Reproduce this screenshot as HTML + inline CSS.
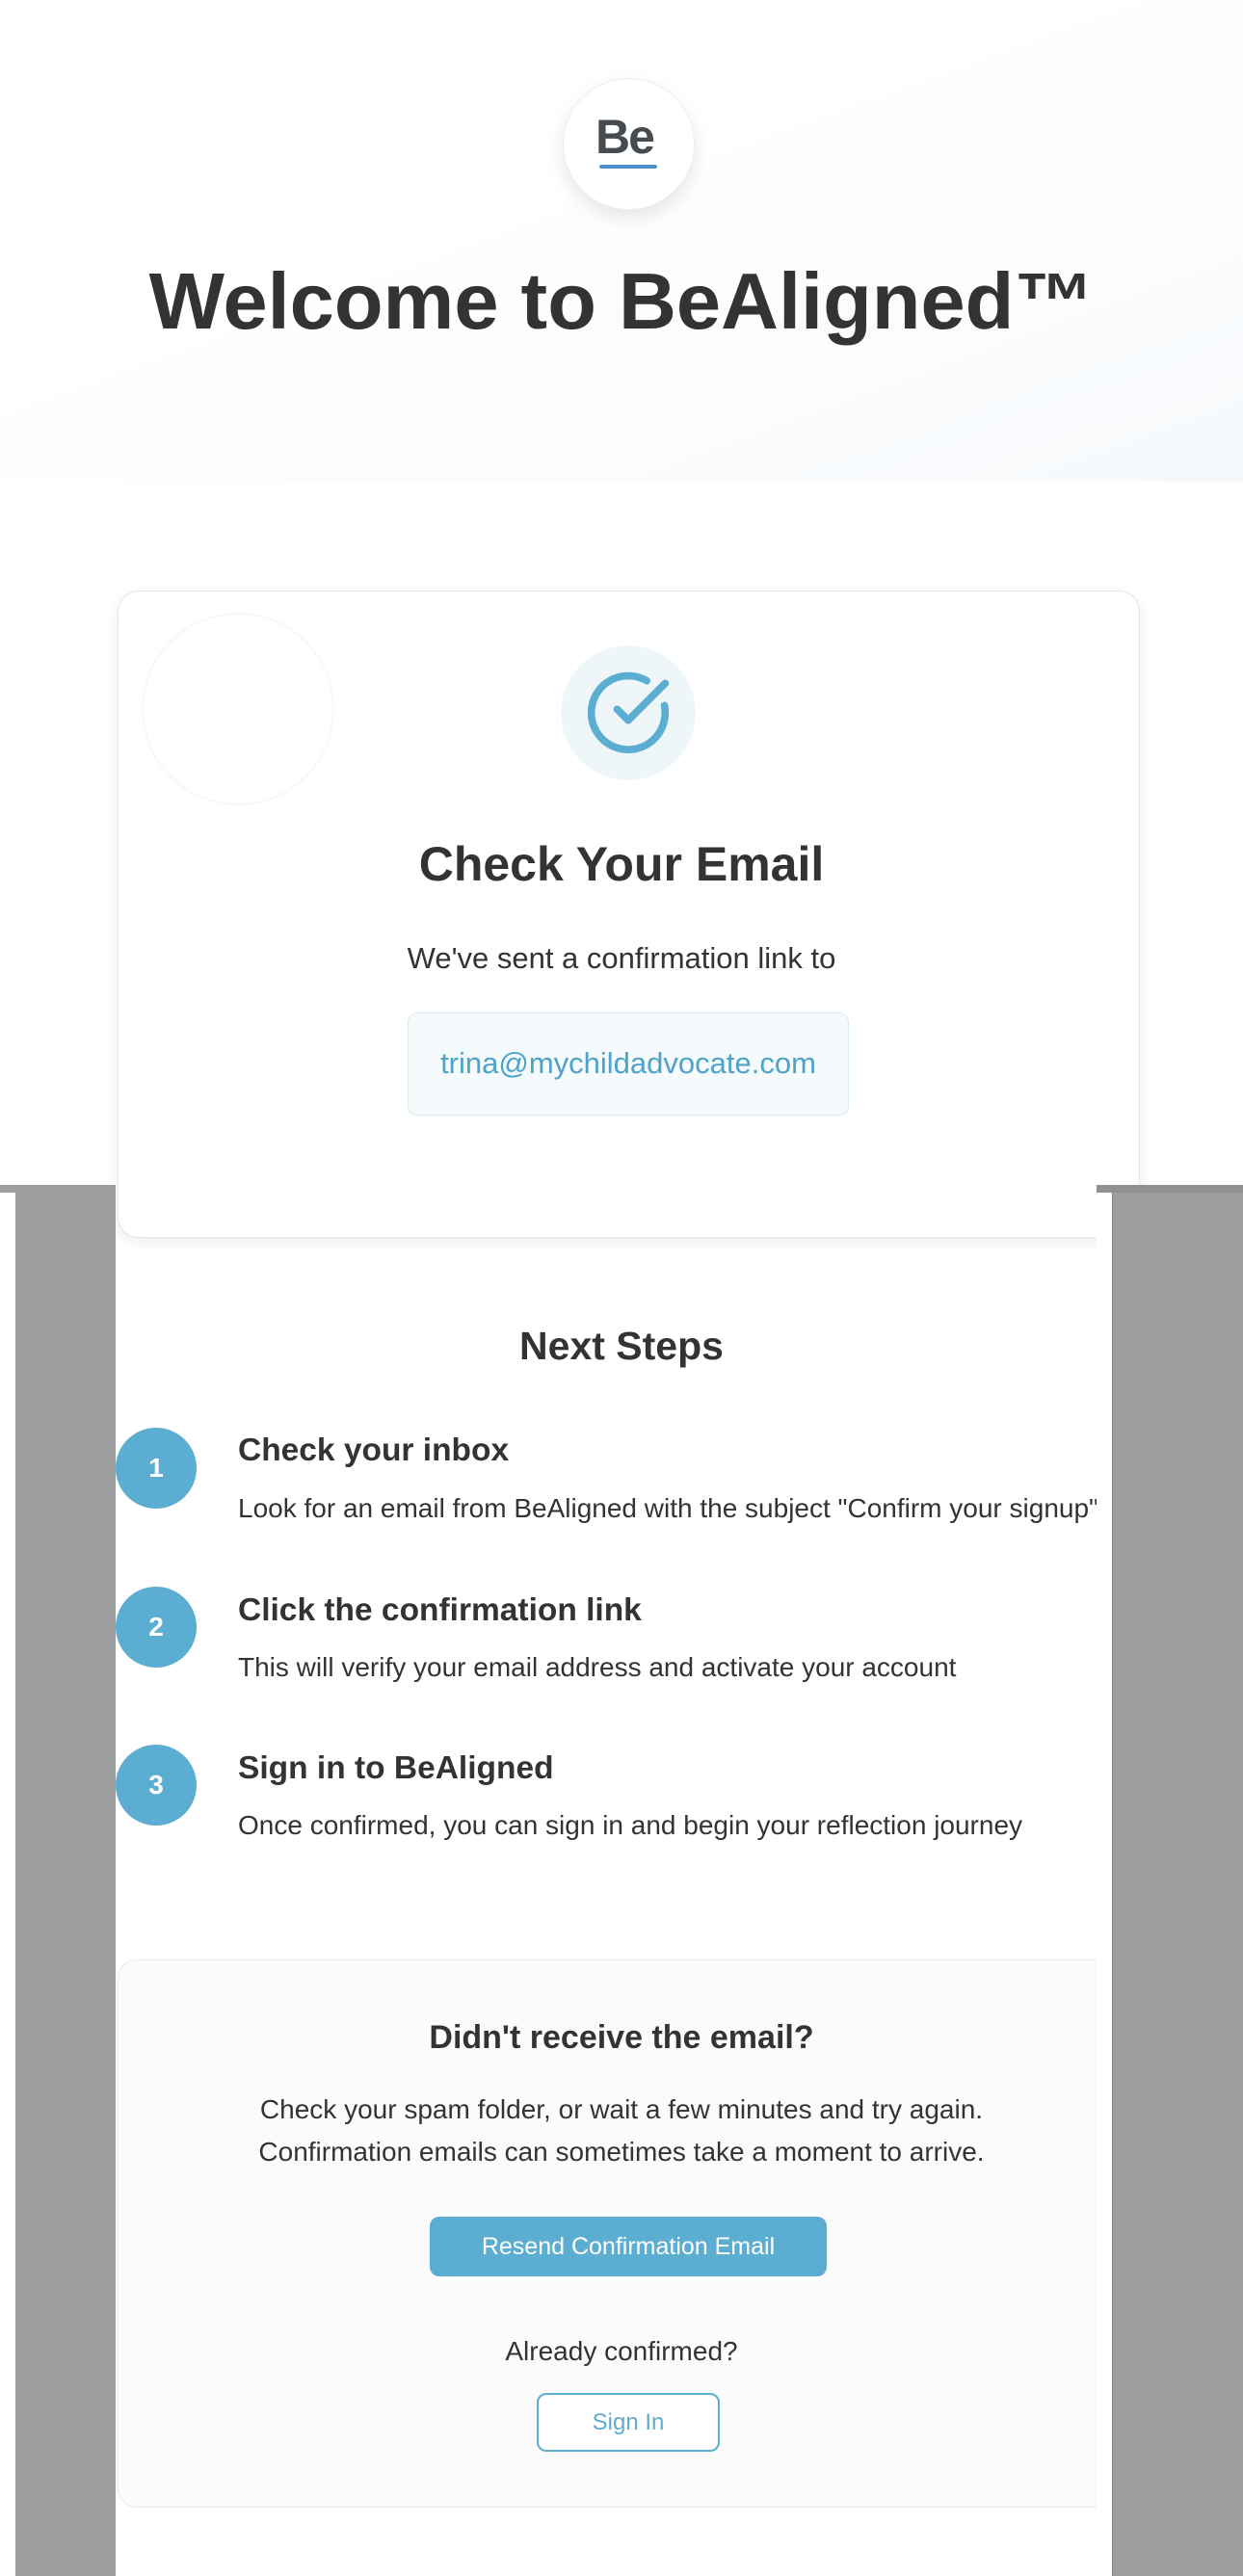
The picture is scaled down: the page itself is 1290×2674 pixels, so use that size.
<!DOCTYPE html>
<html><head><meta charset="utf-8"><style>
*{margin:0;padding:0;box-sizing:border-box}
body{width:1290px;height:2674px;position:relative;background:#fff;font-family:"Liberation Sans",sans-serif;color:#333;overflow:hidden}
.a{position:absolute}
.c{text-align:center;left:0;width:1290px}
.hdr{left:0;top:0;width:1290px;height:500px;background:linear-gradient(160deg,#fff 40%,#f6f9fc 100%)}
.logo{left:584px;top:81px;width:137px;height:137px;border-radius:50%;background:#fff;box-shadow:0 8px 20px rgba(0,0,0,.1);border:1px solid #eee}
.card{left:122px;top:613px;width:1061px;height:672px;border:1px solid #e3e5e8;border-radius:22px;background:#fff;box-shadow:0 4px 14px rgba(0,0,0,.08)}
.num{left:120px;width:84px;height:84px;border-radius:50%;background:#5badd1;color:#fff;font-weight:bold;font-size:28px;line-height:84px;text-align:center}
.h3{left:247px;font-size:33.5px;font-weight:bold;color:#333}
.p{left:247px;font-size:28px;color:#333;white-space:nowrap}
</style></head><body>
<div class="a hdr"></div>
<div class="a logo"></div>
<div class="a" style="left:618px;top:113px;width:70px;font-size:50px;font-weight:bold;color:#464b50;letter-spacing:-2px">Be</div>
<div class="a" style="left:622px;top:171px;width:60px;height:4px;border-radius:2px;background:#4a90d0"></div>
<div class="a c" style="top:265px;font-size:83px;font-weight:bold;color:#333;line-height:96px">Welcome to BeAligned™</div>

<div class="a card"></div>
<div class="a" style="left:147px;top:636px;width:200px;height:200px;border-radius:50%;border:2px solid #f7f8fa"></div>
<div class="a" style="left:582px;top:670px;width:140px;height:140px;border-radius:50%;background:#eef6fa"></div>
<svg class="a" style="left:606px;top:694px" width="92" height="92" viewBox="0 0 24 24" fill="none" stroke="#5badd1" stroke-width="2" stroke-linecap="round" stroke-linejoin="round"><path d="M21.8 10A10 10 0 1 1 17 3.3"/><path d="m9 11 3 3L22 4"/></svg>
<div class="a c" style="top:865px;font-size:50px;font-weight:bold;line-height:64px">Check Your Email</div>
<div class="a c" style="top:977px;font-size:31px;line-height:36px">We've sent a confirmation link to</div>
<div class="a" style="left:423px;top:1051px;width:458px;height:107px;border:1.5px solid #d6ebf3;border-radius:10px;background:#f5fafc;color:#4fa3c9;font-size:31px;line-height:104px;text-align:center">trina@mychildadvocate.com</div>

<div class="a c" style="top:1373px;font-size:41px;font-weight:bold;line-height:48px">Next Steps</div>
<div class="a num" style="top:1482px">1</div>
<div class="a h3" style="top:1487px">Check your inbox</div>
<div class="a p" style="top:1550px">Look for an email from BeAligned with the subject "Confirm your signup"</div>
<div class="a num" style="top:1647px">2</div>
<div class="a h3" style="top:1653px">Click the confirmation link</div>
<div class="a p" style="top:1715px">This will verify your email address and activate your account</div>
<div class="a num" style="top:1811px">3</div>
<div class="a h3" style="top:1817px">Sign in to BeAligned</div>
<div class="a p" style="top:1879px">Once confirmed, you can sign in and begin your reflection journey</div>

<div class="a" style="left:122px;top:2034px;width:1061px;height:569px;border:1.5px solid #e5e7eb;border-radius:20px;background:#fafcfc"></div>
<div class="a c" style="top:2095px;font-size:34px;font-weight:bold;line-height:40px">Didn't receive the email?</div>
<div class="a c" style="top:2168px;font-size:28px;line-height:44px">Check your spam folder, or wait a few minutes and try again.<br>Confirmation emails can sometimes take a moment to arrive.</div>
<div class="a" style="left:446px;top:2301px;width:412px;height:62px;border-radius:10px;background:#5badd1;color:#fff;font-size:25px;line-height:62px;text-align:center">Resend Confirmation Email</div>
<div class="a c" style="top:2424px;font-size:28px;line-height:34px">Already confirmed?</div>
<div class="a" style="left:557px;top:2484px;width:190px;height:61px;border-radius:10px;border:2px solid #5badd1;background:#fff;color:#5badd1;font-size:24px;line-height:57px;text-align:center">Sign In</div>

<div class="a" style="left:0;top:1230px;width:120px;height:1444px;background:#9d9ea0"></div>
<div class="a" style="left:0;top:1238px;width:16px;height:1436px;background:#fff"></div>
<div class="a" style="left:1138px;top:1230px;width:152px;height:8px;background:#8f9092"></div>
<div class="a" style="left:1138px;top:1238px;width:16px;height:1436px;background:#fff"></div>
<div class="a" style="left:1154px;top:1238px;width:136px;height:1436px;background:#9d9ea0;border-left:1px solid #7f8082"></div>
</body></html>
